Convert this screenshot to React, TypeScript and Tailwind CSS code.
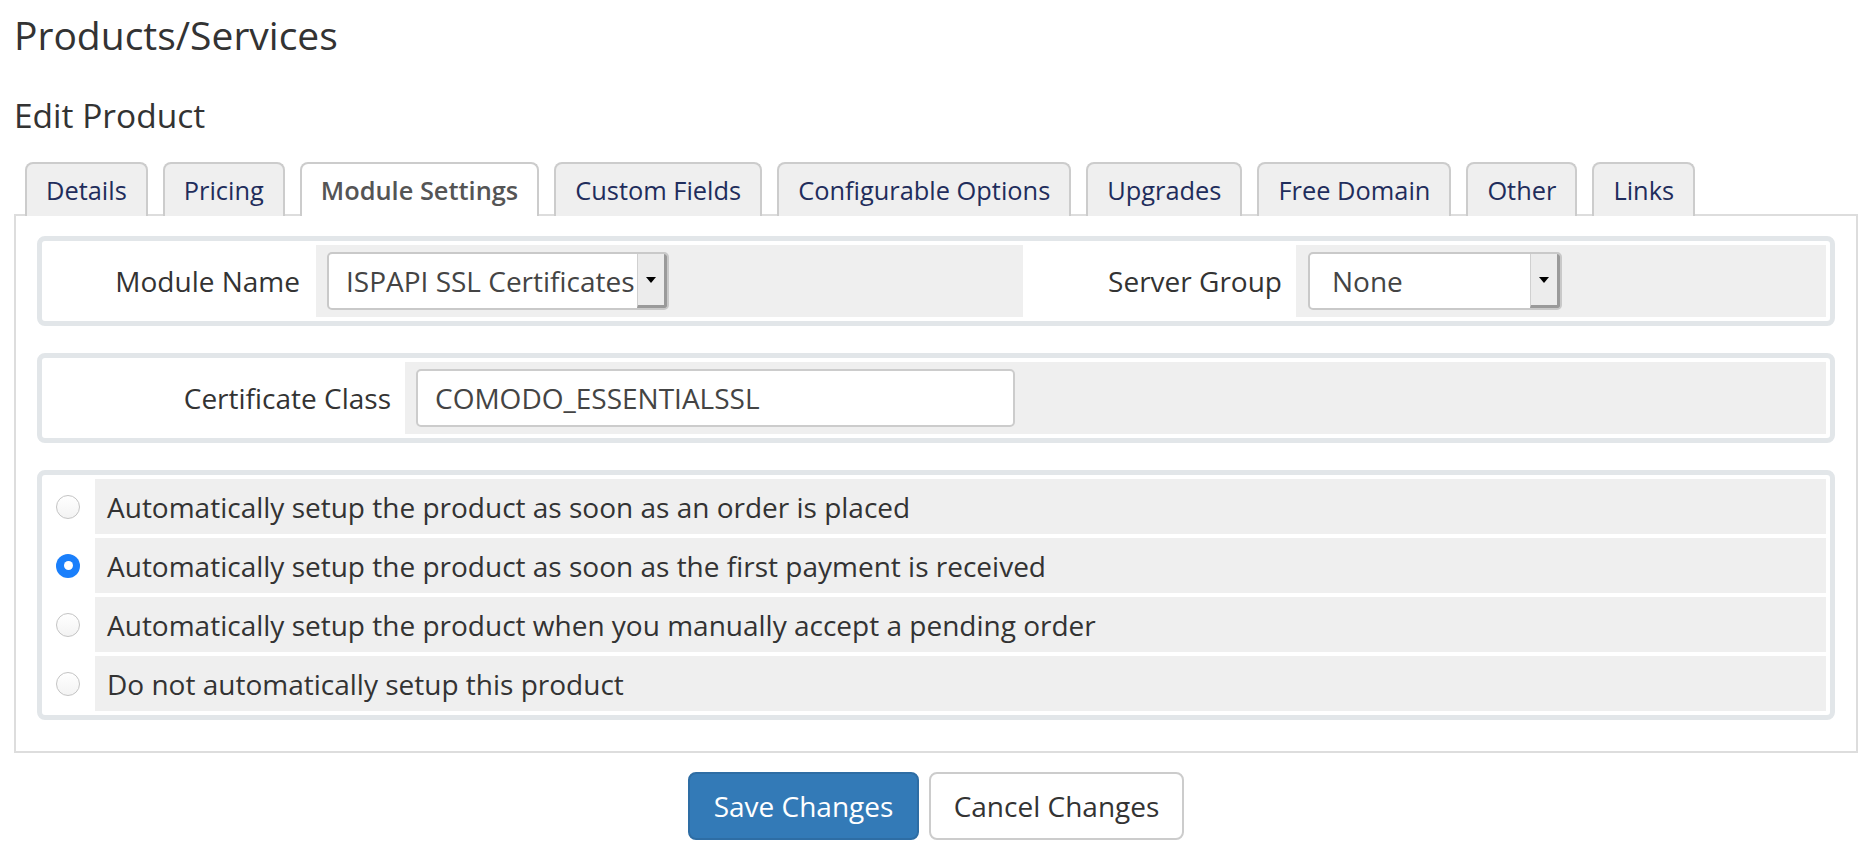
import React from "react";

const tabs = [
    "Details",
    "Pricing",
    "Module Settings",
    "Custom Fields",
    "Configurable Options",
    "Upgrades",
    "Free Domain",
    "Other",
    "Links",
];

const setupOptions = [
    "Automatically setup the product as soon as an order is placed",
    "Automatically setup the product as soon as the first payment is received",
    "Automatically setup the product when you manually accept a pending order",
    "Do not automatically setup this product",
];

function FakeSelect({ value, width, pad }: { value: string; width: string; pad: string }) {
    return (
        <div className={`flex h-[58px] ${width} overflow-hidden rounded-[5px] border-2 border-[#c9c9c9] bg-white`}>
            <div className={`flex flex-1 items-center whitespace-nowrap ${pad} text-[#444]`}>{value}</div>
            <div className="flex w-[30px] shrink-0 items-center justify-center border-r-[3px] border-b-[3px] border-l border-r-[#9a9a9a] border-b-[#9a9a9a] border-l-[#d0d0d0] bg-[#ececec]">
                <span className="h-0 w-0 border-x-[5px] border-t-[6px] border-x-transparent border-t-black" />
            </div>
        </div>
    );
}

function Radio({ checked }: { checked?: boolean }) {
    if (checked) {
        return (
            <span className="flex h-[24px] w-[24px] items-center justify-center rounded-full bg-[#1a7ffb]">
                <span className="h-[9px] w-[9px] rounded-full bg-white" />
            </span>
        );
    }
    return <span className="block h-[24px] w-[24px] rounded-full border-[1.5px] border-[#c4c4c4] bg-gradient-to-b from-white to-[#f3f3f3]" />;
}

export default function App() {
    return (
        <div className="min-h-screen bg-white font-['Open_Sans',sans-serif] text-[28px] text-[#333]">
            <div className="pl-[14px] pr-[12px] pt-[15px]">
                {/* Headings */}
                <h1 className="text-[39px] leading-[40px] text-[#333]">Products/Services</h1>
                <h2 className="mt-[42px] text-[33.5px] leading-[36px] text-[#333]">Edit Product</h2>

                {/* Tabs */}
                <div className="mt-[29px] flex gap-[15px] pl-[11px]">
                    {tabs.map(tab => {
                        const active = tab === "Module Settings";
                        return (
                            <div
                                key={tab}
                                className={`relative -mb-[2px] flex h-[54px] items-center rounded-t-[8px] border-2 border-b-0 border-[#cccccc] px-[19px] text-[25.4px] ${active
                                        ? "z-10 bg-white font-semibold text-[#555]"
                                        : "bg-[#efefef] text-[#1f2d5c]"
                                    }`}
                            >
                                {tab}
                            </div>
                        );
                    })}
                </div>

                {/* Panel */}
                <div className="flex flex-col gap-[27px] border-2 border-[#dddddd] px-[21px] pt-[20px] pb-[31px]">
                    {/* Module / server group */}
                    <div className="rounded-[8px] border-[5px] border-[#e2e6e9] p-[4px]">
                        <div className="flex h-[72px]">
                            <div className="flex w-[270px] items-center justify-end pr-[16px]">Module Name</div>
                            <div className="flex w-[707px] items-center bg-[#efefef] pl-[11px]">
                                <FakeSelect value="ISPAPI SSL Certificates" width="w-[342px]" pad="pl-[17px]" />
                            </div>
                            <div className="flex w-[273px] items-center justify-end pr-[14px]">Server Group</div>
                            <div className="flex flex-1 items-center bg-[#efefef] pl-[12px]">
                                <FakeSelect value="None" width="w-[254px]" pad="pl-[22px]" />
                            </div>
                        </div>
                    </div>

                    {/* Certificate class */}
                    <div className="rounded-[8px] border-[5px] border-[#e2e6e9] p-[4px]">
                        <div className="flex h-[72px]">
                            <div className="flex w-[359px] items-center justify-end pr-[14px]">Certificate Class</div>
                            <div className="flex flex-1 items-center bg-[#efefef] pl-[11px]">
                                <div className="flex h-[58px] w-[599px] items-center rounded-[5px] border-2 border-[#cccccc] bg-white pl-[17px] text-[#444]">
                                    COMODO_ESSENTIALSSL
                                </div>
                            </div>
                        </div>
                    </div>

                    {/* Auto setup */}
                    <div className="flex flex-col gap-[4px] rounded-[8px] border-[5px] border-[#e2e6e9] p-[4px]">
                        {setupOptions.map((opt, i) => (
                            <div key={opt} className="flex h-[55px]">
                                <div className="flex w-[49px] items-center pl-[10px]">
                                    <Radio checked={i === 1} />
                                </div>
                                <div className="flex flex-1 items-center bg-[#efefef] pl-[12px] text-[#333]">{opt}</div>
                            </div>
                        ))}
                    </div>
                </div>

                {/* Actions */}
                <div className="mt-[19px] flex justify-center gap-[10px]">
                    <button className="h-[68px] w-[231px] rounded-[8px] border-2 border-[#2e6da4] bg-[#337ab7] text-white">
                        Save Changes
                    </button>
                    <button className="h-[68px] w-[255px] rounded-[8px] border-2 border-[#cccccc] bg-white text-[#333]">
                        Cancel Changes
                    </button>
                </div>
            </div>
        </div>
    );
}
